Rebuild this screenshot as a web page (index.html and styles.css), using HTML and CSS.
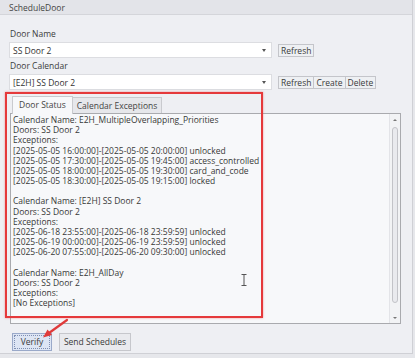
FILE: index.html
```html
<!DOCTYPE html>
<html>
<head>
<meta charset="utf-8">
<link rel="stylesheet" href="styles.css">
</head>
<body>
<div class="window">
  <div class="titlebar">ScheduleDoor</div>
  <div class="content">
    <div class="label">Door Name</div>
    <div class="row">
      <div class="combo"><span>SS Door 2</span><span class="arrow"></span></div>
      <div class="btns"><button class="btn">Refresh</button></div>
    </div>
    <div class="label">Door Calendar</div>
    <div class="row">
      <div class="combo"><span>[E2H] SS Door 2</span><span class="arrow"></span></div>
      <div class="btns"><button class="btn">Refresh</button><button class="btn">Create</button><button class="btn">Delete</button></div>
    </div>
    <div class="tabs">
      <div class="tab active">Door Status</div>
      <div class="tab">Calendar Exceptions</div>
    </div>
    <div class="box">
      <div class="text">
        <div>Calendar Name: E2H_MultipleOverlapping_Priorities</div>
        <div>Doors: SS Door 2</div>
        <div>Exceptions:</div>
        <div>[2025-05-05 16:00:00]-[2025-05-05 20:00:00] unlocked</div>
        <div>[2025-05-05 17:30:00]-[2025-05-05 19:45:00] access_controlled</div>
        <div>[2025-05-05 18:00:00]-[2025-05-05 19:30:00] card_and_code</div>
        <div>[2025-05-05 18:30:00]-[2025-05-05 19:15:00] locked</div>
        <div>&nbsp;</div>
        <div>Calendar Name: [E2H] SS Door 2</div>
        <div>Doors: SS Door 2</div>
        <div>Exceptions:</div>
        <div>[2025-06-18 23:55:00]-[2025-06-18 23:59:59] unlocked</div>
        <div>[2025-06-19 00:00:00]-[2025-06-19 23:59:59] unlocked</div>
        <div>[2025-06-20 07:55:00]-[2025-06-20 09:30:00] unlocked</div>
        <div>&nbsp;</div>
        <div>Calendar Name: E2H_AllDay</div>
        <div>Doors: SS Door 2</div>
        <div>Exceptions:</div>
        <div>[No Exceptions]</div>
      </div>
      <div class="scrollbar">
        <span class="sarrow up"></span>
        <span class="thumb"></span>
        <span class="sarrow down"></span>
      </div>
    </div>
    <div class="actions">
      <button class="btn big focus">Verify</button>
      <button class="btn big send">Send Schedules</button>
    </div>
  </div>
  <div class="highlight"></div>
  <svg class="cursor" width="8" height="12" viewBox="0 0 8 12"><path d="M1.5 0.5h5M1.5 11.5h5M4 0.5v11" stroke="#555" stroke-width="1" fill="none"/></svg>
  <svg class="redarrow" width="30" height="22" viewBox="0 0 30 22"><path d="M27 2 L9 15" stroke="#e03a3a" stroke-width="2.2" stroke-linecap="round" fill="none"/><path d="M3 19.5 L7.5 11.5 L12 17 Z" fill="#e03a3a"/></svg>
</div>
</body>
</html>
```
FILE: styles.css
```css
* { box-sizing: border-box; }
html, body { margin: 0; padding: 0; }
body {
  width: 415px;
  height: 358px;
  background: #e6e7eb;
  font-family: "Open Sans", "Noto Sans", sans-serif;
  font-size: 8.5px;
  color: #3a3a3a;
  overflow: hidden;
}
.window {
  position: relative;
  width: 413px;
  height: 354px;
  background: #eeeff3;
  border-right: 1px solid #cfd0d5;
  border-bottom: 1px solid #cfd0d5;
}
.titlebar {
  height: 15px;
  line-height: 15px;
  padding-left: 9px;
  background: #e3e4e9;
  border-bottom: 1px solid #d4d5da;
  color: #444;
}
.content {
  padding: 13px 0 0 9px;
  display: flex;
  flex-direction: column;
}
.label {
  height: 12px;
  line-height: 12px;
  padding-left: 1px;
  color: #3c3c3c;
  margin-bottom: 2px;
}
.row {
  display: flex;
  align-items: center;
  gap: 6px;
  height: 16px;
  margin-bottom: 2px;
}
.combo {
  width: 263px;
  height: 16px;
  background: #fff;
  border: 1px solid #dcdde1;
  display: flex;
  align-items: center;
  justify-content: space-between;
  padding: 0 4px 0 3px;
  color: #333;
}
.arrow {
  width: 0; height: 0;
  border-left: 2px solid transparent;
  border-right: 2px solid transparent;
  border-top: 3px solid #555;
  margin-right: 1px;
}
.btns { display: flex; }
.btn {
  font: inherit;
  color: #3a3a3a;
  height: 13px;
  padding: 0 2px;
  line-height: 11px;
  background: #eef0f3;
  border: 1px solid #c4c5ca;
  margin: 0;
}
.btns .btn + .btn { margin-left: -1px; }
.tabs {
  display: flex;
  margin-top: 4px;
  padding-left: 3px;
  height: 17px;
  position: relative;
  z-index: 1;
}
.tab {
  height: 17px;
  line-height: 16px;
  padding: 0 8px;
  background: #e6e7eb;
  border: 1px solid #c9cace;
  border-bottom: none;
  color: #444;
}
.tab.active {
  width: 61px;
  text-align: center;
  background: #f7f8fa;
  height: 18px;
  padding: 0;
}
.tab + .tab { margin-left: -1px; width: 90px; text-align: center; padding: 0; margin-top: 1px; height: 16px; }
.box {
  margin-left: 1px;
  width: 391px;
  height: 211px;
  background: #f7f8fa;
  border: 1px solid #a9aaae;
  display: flex;
  justify-content: space-between;
}
.text {
  padding: 1px 0 0 2px;
  line-height: 10.17px;
  color: #383838;
  white-space: nowrap;
}
.scrollbar {
  width: 11px;
  display: flex;
  flex-direction: column;
  align-items: center;
  padding: 5px 0 4px;
  border-left: 1px solid #e3e4e8;
  background: #f2f3f5;
}
.sarrow {
  width: 0; height: 0;
  border-left: 2px solid transparent;
  border-right: 2px solid transparent;
}
.sarrow.up { border-bottom: 2px solid #777; }
.sarrow.down { border-top: 2px solid #777; }
.thumb {
  flex: 1;
  width: 6px;
  margin: 6px 0 14px;
  border: 1px solid #c2c3c8;
  border-radius: 3px;
  background: #e9eaee;
}
.actions {
  display: flex;
  gap: 7px;
  margin-top: 9px;
  padding-left: 3px;
}
.btn.big {
  height: 18px;
  line-height: 16px;
  background: #e9eaee;
  border: 1px solid #c6c7cc;
}
.btn.focus {
  width: 40px;
  background: #dde5f4;
  border: 1px solid #9aa9c9;
  outline: 1px dotted #7f8fb2;
  outline-offset: -3px;
}
.btn.send { width: 72px; }
.highlight {
  position: absolute;
  left: 5px;
  top: 92px;
  width: 258px;
  height: 226px;
  border: 2px solid #e5393b;
  box-shadow: 0 0 2px rgba(229,57,59,0.5);
  pointer-events: none;
}
.cursor {
  position: absolute;
  left: 240px;
  top: 274px;
}
.redarrow {
  position: absolute;
  left: 40px;
  top: 318px;
}
```
